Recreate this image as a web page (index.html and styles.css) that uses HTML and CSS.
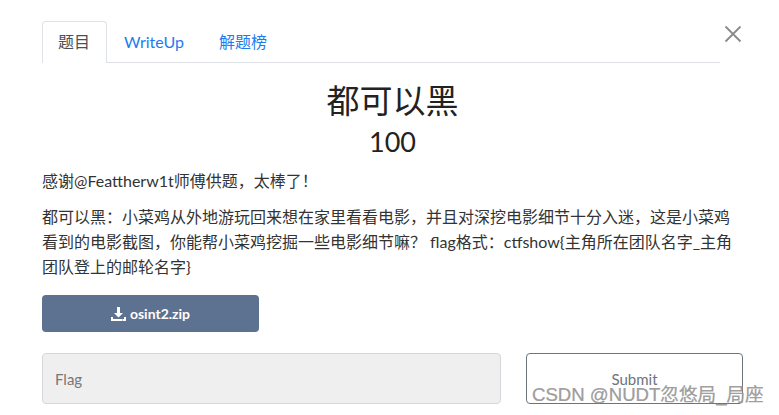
FILE: index.html
```html
<!DOCTYPE html>
<html lang="zh">
<head>
<meta charset="utf-8">
<link rel="stylesheet" href="styles.css">
</head>
<body>
<div class="modal">
  <div class="header">
    <ul class="tabs">
      <li class="tab active">题目</li>
      <li class="tab">WriteUp</li>
      <li class="tab">解题榜</li>
    </ul>
    <button class="close" aria-label="close">
      <svg width="18" height="18" viewBox="0 0 18 18"><path d="M1.5 1.5 L16.5 16.5 M16.5 1.5 L1.5 16.5" stroke="#8a8a8a" stroke-width="1.8" fill="none"/></svg>
    </button>
  </div>
  <h2 class="title">都可以黑</h2>
  <h3 class="value">100</h3>
  <p class="desc first">感谢@Feattherw1t师傅供题，太棒了！</p>
  <p class="desc">都可以黑：小菜鸡从外地游玩回来想在家里看看电影，并且对深挖电影细节十分入迷，这是小菜鸡看到的电影截图，你能帮小菜鸡挖掘一些电影细节嘛？ flag格式：ctfshow{主角所在团队名字_主角团队登上的邮轮名字}</p>
  <div class="files">
    <a class="download">
      <svg width="15" height="14" viewBox="0 0 15 14"><path d="M6 0 H9 V6 H12 L7.5 10.5 L3 6 H6 Z" fill="#fff"/><path d="M0 10 H2 V12 H13 V10 H15 V14 H0 Z" fill="#fff"/><rect x="11" y="12.6" width="1" height="0.8" fill="#5d7190"/></svg>
      <span>osint2.zip</span>
    </a>
  </div>
  <div class="submit-row">
    <input class="flag" type="text" placeholder="Flag">
    <button class="submit">Submit</button>
  </div>
</div>
<div class="watermark">CSDN @NUDT忽悠局_局座</div>
</body>
</html>
```
FILE: styles.css
```css
html, body {
  margin: 0;
  padding: 0;
  background: #fff;
  font-family: Lato, "Noto Sans CJK SC", sans-serif;
  color: #333;
}
.modal {
  width: 701px;
  margin-left: 42px;
  padding-top: 21px;
}
.header {
  display: flex;
  align-items: flex-start;
}
.tabs {
  list-style: none;
  margin: 0;
  padding: 0;
  display: flex;
  width: 678px;
  border-bottom: 1px solid #dee2e6;
}
.tab {
  height: 40px;
  line-height: 40px;
  padding: 0 17px 0 16px;
  font-size: 16px;
  color: #1d7bf0;
  border: 1px solid transparent;
  border-bottom: none;
  margin-bottom: -1px;
  box-sizing: content-box;
}
.tab.active {
  color: #495057;
  border-color: #dee2e6;
  background: #fff;
  border-radius: 4px 4px 0 0;
  padding: 0 16px 1px 15px;
  height: 40px;
}
.close {
  margin-left: 4px;
  margin-top: 4px;
  background: none;
  border: none;
  padding: 0;
  width: 18px;
  height: 18px;
  display: flex;
}
.title {
  margin: 17px 0 0;
  text-align: center;
  font-size: 33px;
  font-weight: 400;
  line-height: 40px;
  color: #222;
}
.value {
  margin: 6px 0 0;
  text-align: center;
  font-size: 27px;
  font-weight: 400;
  line-height: 32px;
  color: #222;
}
.desc {
  margin: 11px 0 0;
  font-size: 16px;
  line-height: 25px;
  color: #333;
}
.desc.first {
  margin-top: 10px;
}
.files {
  margin-top: 16px;
}
.download {
  width: 217px;
  height: 37px;
  background: #5d7190;
  border-radius: 4px;
  color: #fff;
  font-weight: 700;
  font-size: 14px;
  display: flex;
  align-items: center;
  justify-content: center;
  gap: 4px;
}
.download svg {
  margin-top: 1px;
}
.submit-row {
  margin-top: 21px;
  display: grid;
  grid-template-columns: 459px 217px;
  column-gap: 25px;
}
.flag {
  height: 51px;
  box-sizing: border-box;
  background: #efefef;
  border: 1px solid #d4d8dc;
  border-radius: 4px;
  padding: 0 12px;
  font-family: Lato, sans-serif;
  font-size: 15px;
  color: #333;
}
.flag::placeholder {
  color: #777;
}
.submit {
  height: 51px;
  box-sizing: border-box;
  background: #fff;
  border: 1px solid #6c757d;
  border-radius: 4px;
  font-family: Lato, sans-serif;
  font-size: 15px;
  color: #6c757d;
  padding-top: 2px;
}
.watermark {
  position: absolute;
  left: 532px;
  top: 384px;
  font-family: "Liberation Sans", "Noto Sans CJK SC", sans-serif;
  font-size: 18.6px;
  line-height: 22px;
  color: #a0a0a0;
  -webkit-text-stroke: 0.2px #888;
}
```
